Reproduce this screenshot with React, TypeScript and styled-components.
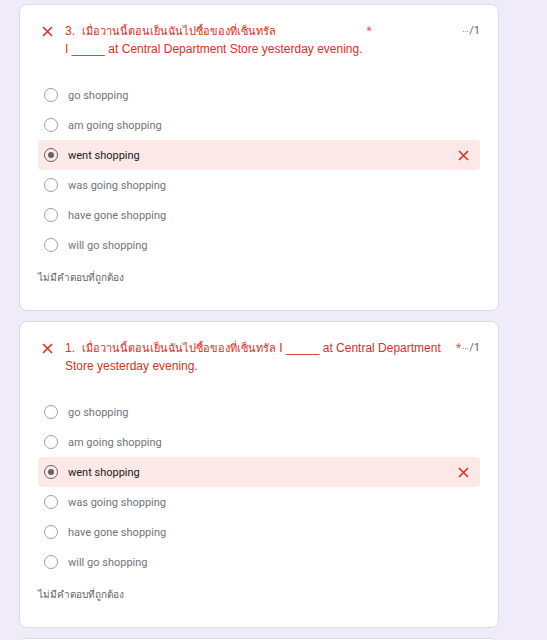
import styled, { createGlobalStyle } from 'styled-components'

const GlobalStyle = createGlobalStyle`
  html, body {
    margin: 0;
    padding: 0;
    background: #f0ebf8;
  }
  body {
    font-family: Roboto, 'Noto Sans', 'DejaVu Sans', sans-serif;
  }
`

type Question = {
  id: number
  num: string
  thai: string
  english: string
  breakLine: boolean
  options: string[]
  picked: number
}

const shopping = ['go shopping', 'am going shopping', 'went shopping', 'was going shopping', 'have gone shopping', 'will go shopping']

const questions: Question[] = [
  {
    id: 1,
    num: '3.',
    thai: 'เมื่อวานนี้ตอนเย็นฉันไปซื้อของที่เซ็นทรัล',
    english: 'I _____ at Central Department Store yesterday evening.',
    breakLine: true,
    options: shopping,
    picked: 2
  },
  {
    id: 2,
    num: '1.',
    thai: 'เมื่อวานนี้ตอนเย็นฉันไปซื้อของที่เซ็นทรัล',
    english: 'I _____ at Central Department Store yesterday evening.',
    breakLine: false,
    options: shopping,
    picked: 2
  }
]

const Page = styled.div`
  padding: 4px 0 0 19px;
  display: flex;
  flex-direction: column;
  gap: 10px;
  height: 640px;
  overflow: hidden;
  box-sizing: border-box;
`

const Card = styled.div`
  width: 480px;
  flex: none;
  box-sizing: border-box;
  background: #fff;
  border: 1px solid #dadce0;
  border-radius: 8px;
  padding: 17px 18px 24px 18px;
`

const Header = styled.div`
  display: flex;
  align-items: flex-start;
  padding-left: 4px;
`

const StatusIcon = styled.div`
  flex: none;
  width: 23px;
  height: 18px;
  display: flex;
  align-items: center;
`

const TitleBox = styled.div`
  flex: 1;
  min-width: 0;
  display: flex;
  align-items: flex-start;
`

const TitleText = styled.div`
  flex: 0 1 auto;
  color: #d93025;
  font-family: 'Liberation Sans', Roboto, sans-serif;
  font-size: 12px;
  line-height: 18px;
`

const Num = styled.span`
  margin-right: 7px;
`

const Thai = styled.span`
  font-size: 11px;
`

const Asterisk = styled.span`
  flex: none;
  color: #e06055;
  font-size: 12px;
  line-height: 18px;
  padding-left: 4px;
`

const Score = styled.div`
  flex: none;
  margin-left: 2px;
  font-size: 11px;
  line-height: 18px;
  color: #5f6368;
  display: flex;
  align-items: center;
`

const Dot = styled.span`
  width: 1px;
  height: 1px;
  margin-right: 1px;
  margin-top: 1px;
  background: #9aa0a6;
`

const Options = styled.div`
  margin-top: 22px;
  display: flex;
  flex-direction: column;
`

const OptionRow = styled.div<{ $wrong?: boolean }>`
  height: 30px;
  display: flex;
  align-items: center;
  padding: 0 11px 0 6px;
  border-radius: 4px;
  background: ${(p) => (p.$wrong ? '#fce8e6' : 'transparent')};
`

const Radio = styled.div<{ $checked?: boolean }>`
  flex: none;
  width: 14px;
  height: 14px;
  box-sizing: border-box;
  border-radius: 50%;
  border: 1.5px solid ${(p) => (p.$checked ? '#5f6368' : '#9aa0a6')};
  display: flex;
  align-items: center;
  justify-content: center;
  &::after {
    content: '';
    display: ${(p) => (p.$checked ? 'block' : 'none')};
    width: 6px;
    height: 6px;
    border-radius: 50%;
    background: #5f6368;
  }
`

const OptionLabel = styled.span<{ $checked?: boolean }>`
  flex: 1;
  margin-left: 10px;
  font-size: 11px;
  color: ${(p) => (p.$checked ? '#202124' : '#70757a')};
`

const Footer = styled.div`
  margin-top: 10px;
  font-size: 10px;
  line-height: 16px;
  color: #5f6368;
`

const CrossIcon = ({ size = 11 }: { size?: number }) => (
  <svg width={size} height={size} viewBox='0 0 11 11'>
    <path d='M1 1 L10 10 M10 1 L1 10' stroke='#d93025' strokeWidth='1.6' fill='none' />
  </svg>
)

const QuestionCard = ({ q }: { q: Question }) => (
  <Card>
    <Header>
      <StatusIcon>
        <CrossIcon />
      </StatusIcon>
      <TitleBox>
        <TitleText>
          <Num>{q.num}</Num>
          <Thai>{q.thai}</Thai>
          {q.breakLine ? <br /> : ' '}
          {q.english}
        </TitleText>
        <Asterisk>*</Asterisk>
      </TitleBox>
      <Score>
        <Dot />
        <Dot />
        <Dot />
        /1
      </Score>
    </Header>
    <Options>
      {q.options.map((opt, i) => (
        <OptionRow key={opt} $wrong={i === q.picked}>
          <Radio $checked={i === q.picked} />
          <OptionLabel $checked={i === q.picked}>{opt}</OptionLabel>
          {i === q.picked && <CrossIcon size={11} />}
        </OptionRow>
      ))}
    </Options>
    <Footer>ไม่มีคำตอบที่ถูกต้อง</Footer>
  </Card>
)

const App = () => {
  return (
    <>
      <GlobalStyle />
      <Page>
        {questions.map((q) => (
          <QuestionCard key={q.id} q={q} />
        ))}
        <Card />
      </Page>
    </>
  )
}

export default App
